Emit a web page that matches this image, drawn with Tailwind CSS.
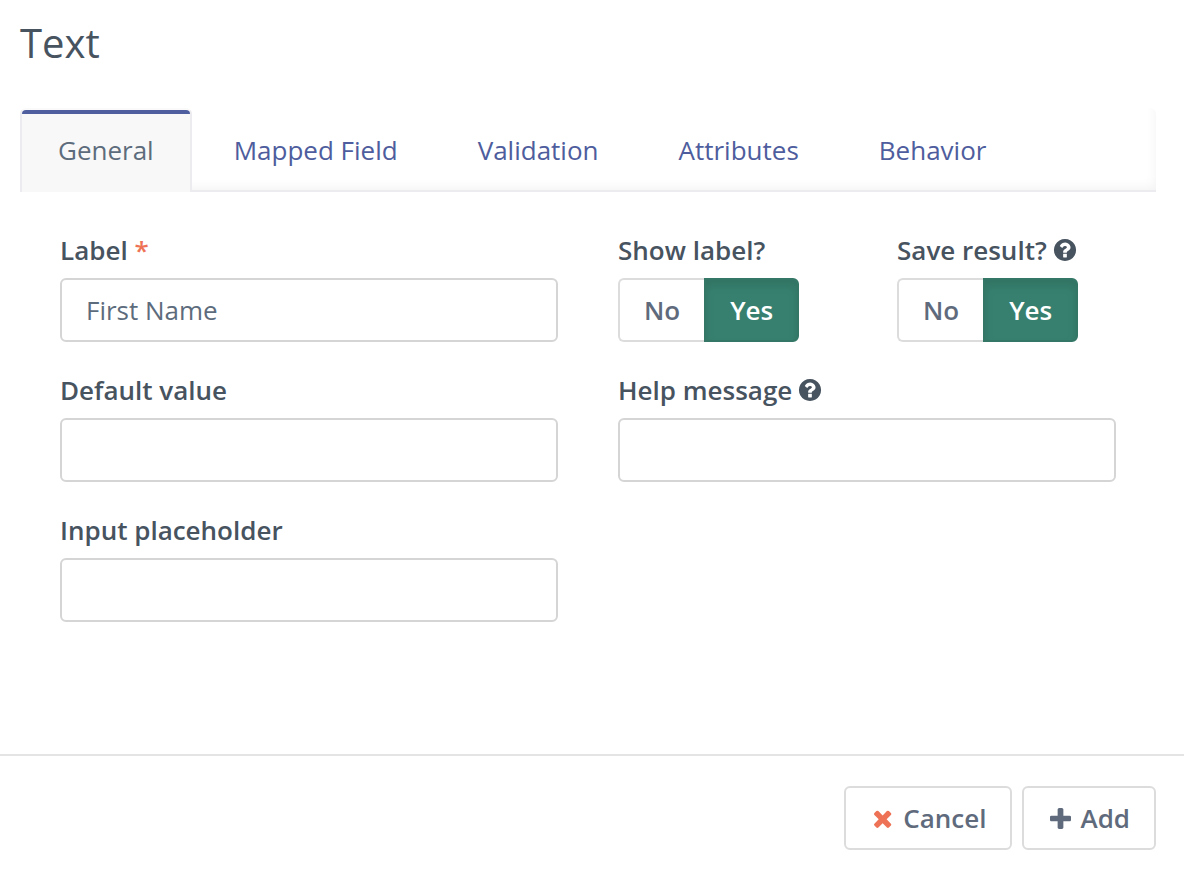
<!DOCTYPE html>
<html lang="en">
<head>
<meta charset="utf-8">
<meta name="viewport" content="width=device-width, initial-scale=1">
<title>Text</title>
<script src="https://cdn.jsdelivr.net/npm/@tailwindcss/browser@4"></script>
</head>
<body class="min-h-screen bg-white font-['Open_Sans',sans-serif] text-[26px] leading-9 text-[#47535f]">
<svg class="hidden" aria-hidden="true">
  <symbol id="help" viewBox="-64 -64 1664 1664">
    <path fill="currentColor" d="M896 1248v-192q0-14-9-23t-23-9H672q-14 0-23 9t-9 23v192q0 14 9 23t23 9h192q14 0 23-9t9-23zm256-672q0-88-55.500-163T958 297t-170-41q-243 0-371 213-15 24 8 42l132 100q7 6 19 6 16 0 25-12 53-68 86-92 34-24 86-24 48 0 85.500 26t37.500 59q0 38-20 61t-68 45q-63 28-115.500 86.500T640 892v36q0 14 9 23t23 9h192q14 0 23-9t9-23q0-19 21.500-49.500T972 829q32-18 49-28.500t46-35 44.500-48 28-60.500 12.500-81zm384 192q0 209-103 385.500T1153.500 1433 768 1536t-385.500-103T103 1153.500 0 768t103-385.500T382.500 103 768 0t385.500 103T1433 382.500 1536 768z"/>
  </symbol>
</svg>
<main class="flex min-h-screen flex-col">
  <h1 class="px-5 pt-4 text-[40px] leading-[54px]">Text</h1>
  <div class="pt-[38px] pr-7 pl-5">
    <div class="flex h-21 rounded-t-md border-b-2 border-[#ebebf0] text-[#4e5d9d] shadow-[inset_-10px_-12px_12px_-10px_#f2f2f2]" role="tablist">
      <button type="button" role="tab" aria-selected="true" class="-mb-0.5 flex flex-col rounded-t-md border-2 border-b-0 border-[#ebebf0] border-t-[#fafafa] bg-[#f8f8f8] text-[#5d6c7c]"><span class="h-1 w-full rounded-t-sm bg-[#4e5e9e]"></span><span class="flex flex-1 items-center px-9 pb-1.5">General</span></button>
      <div class="ml-0.5 flex">
        <button type="button" role="tab" class="px-10 pt-0.5">Mapped Field</button>
        <button type="button" role="tab" class="px-10 pt-0.5">Validation</button>
        <button type="button" role="tab" class="px-10 pt-0.5">Attributes</button>
        <button type="button" role="tab" class="px-10 pt-0.5">Behavior</button>
      </div>
    </div>
  </div>
  <form id="field-form" class="grid grid-cols-2 gap-x-15 gap-y-[30px] pt-10 pr-17 pl-15 font-semibold">
    <div>
      <label for="label" class="mb-2.5 block">Label <span class="text-[#ee7356]">*</span></label>
      <input id="label" value="First Name" class="block h-16 w-full rounded-md border-2 border-[#d5d5d5] px-6 font-normal text-[#5d6c7c]">
    </div>
    <div class="grid grid-cols-2 gap-x-15">
      <div role="group" aria-labelledby="show-label">
        <div id="show-label" class="mb-2.5 whitespace-nowrap">Show label?</div>
        <div class="flex h-16">
          <button type="button" class="rounded-l-md border-2 border-r-0 border-[#dcdcdc] px-6 text-[#5f6b7c]">No</button>
          <button type="button" aria-pressed="true" class="rounded-r-md border-2 border-[#347767] bg-[#37806f] px-6 text-white shadow-[inset_0_6px_10px_rgba(0,0,0,0.1)]">Yes</button>
        </div>
      </div>
      <div role="group" aria-labelledby="save-result">
        <div id="save-result" class="mb-2.5 flex items-center gap-1.5 whitespace-nowrap">Save result?<svg class="size-6" aria-hidden="true"><use href="#help"/></svg></div>
        <div class="flex h-16">
          <button type="button" class="rounded-l-md border-2 border-r-0 border-[#dcdcdc] px-6 text-[#5f6b7c]">No</button>
          <button type="button" aria-pressed="true" class="rounded-r-md border-2 border-[#347767] bg-[#37806f] px-6 text-white shadow-[inset_0_6px_10px_rgba(0,0,0,0.1)]">Yes</button>
        </div>
      </div>
    </div>
    <div>
      <label for="default-value" class="mb-2.5 block">Default value</label>
      <input id="default-value" class="block h-16 w-full rounded-md border-2 border-[#d5d5d5] px-6 font-normal text-[#5d6c7c]">
    </div>
    <div>
      <label for="help-message" class="mb-2.5 flex items-center gap-1.5">Help message<svg class="size-6" aria-hidden="true"><use href="#help"/></svg></label>
      <input id="help-message" class="block h-16 w-full rounded-md border-2 border-[#d5d5d5] px-6 font-normal text-[#5d6c7c]">
    </div>
    <div>
      <label for="placeholder" class="mb-2.5 block">Input placeholder</label>
      <input id="placeholder" class="block h-16 w-full rounded-md border-2 border-[#d5d5d5] px-6 font-normal text-[#5d6c7c]">
    </div>
  </form>
  <footer class="mt-auto flex justify-end gap-2.5 border-t-2 border-[#e4e4e4] pt-[30px] pr-7 pb-[22px] font-semibold text-[#5f6b7c]">
    <button type="button" class="flex h-16 items-center gap-[11px] rounded-md border-2 border-[#dcdcdc] px-6"><svg class="ml-1 h-5 w-[18px] overflow-visible text-[#ee7356]" viewBox="302 181 1236 1373" aria-hidden="true"><path fill="currentColor" d="M1490 1322q0 40-28 68l-136 136q-28 28-68 28t-68-28l-294-294-294 294q-28 28-68 28t-68-28l-136-136q-28-28-28-68t28-68l294-294-294-294q-28-28-28-68t28-68l136-136q28-28 68-28t68 28l294 294 294-294q28-28 68-28t68 28l136 136q28 28 28 68t-28 68l-294 294 294 294q28 28 28 68z"/></svg>Cancel</button>
    <button type="button" class="flex h-16 items-center gap-[9px] rounded-md border-2 border-[#dcdcdc] px-6"><svg class="ml-0.5 size-[21px]" viewBox="0 0 1408 1408" aria-hidden="true"><path fill="currentColor" d="M1408 608v192q0 40-28 68t-68 28H896v416q0 40-28 68t-68 28H608q-40 0-68-28t-28-68V896H96q-40 0-68-28T0 800V608q0-40 28-68t68-28h416V96q0-40 28-68t68-28h192q40 0 68 28t28 68v416h416q40 0 68 28t28 68z"/></svg>Add</button>
  </footer>
</main>
</body>
</html>
